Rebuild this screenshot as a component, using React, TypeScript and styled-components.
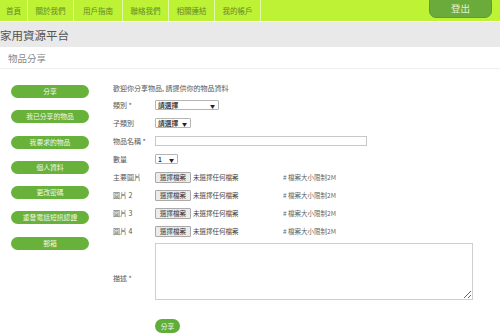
import React from 'react';
import styled, { createGlobalStyle } from 'styled-components';

const GlobalStyle = createGlobalStyle`
  html, body {
    margin: 0;
    padding: 0;
    background: #ffffff;
  }
  body {
    font-family: "Noto Sans CJK TC", "Noto Sans", sans-serif;
    color: #444444;
    overflow: hidden;
  }
`;

const Page = styled.div`
  width: 500px;
  height: 334px;
  overflow: hidden;
`;

const NavBar = styled.nav`
  display: flex;
  align-items: stretch;
  height: 21px;
  background-color: #bdf235;
`;

const NavItem = styled.a<{ $width: number }>`
  display: flex;
  align-items: center;
  justify-content: center;
  width: ${props => props.$width}px;
  border-right: 1px solid #e4f9a8;
  font-size: 7.5px;
  color: #668a2a;
  text-decoration: none;
  box-sizing: border-box;
`;

const LogoutButton = styled.button`
  margin-left: auto;
  margin-right: 8px;
  margin-top: -5px;
  width: 63px;
  height: 23px;
  padding-top: 4px;
  border: 1px solid #5e9a35;
  border-radius: 7px;
  background-color: #6aab3c;
  color: #e2f2d4;
  font-family: inherit;
  font-size: 9.5px;
  cursor: pointer;
`;

const TitleBand = styled.div`
  display: flex;
  align-items: center;
  height: 25px;
  margin-top: 1px;
  background-color: #e9e9e9;
  font-size: 11.5px;
  color: #555555;
`;

const SubHeader = styled.div`
  display: flex;
  align-items: center;
  height: 21px;
  padding-left: 8px;
  border-bottom: 1px solid #efefef;
  font-size: 9.5px;
  color: #8a8a8a;
`;

const Body = styled.div`
  display: flex;
`;

const Sidebar = styled.aside`
  display: flex;
  flex-direction: column;
  gap: 12.3px;
  width: 100px;
  padding: 16px 0 0 11px;
  box-sizing: border-box;
`;

const SideButton = styled.button`
  width: 78px;
  height: 13px;
  padding: 0;
  border: none;
  border-radius: 7px;
  background-color: #68b13b;
  color: #f2f8ec;
  font-family: inherit;
  font-size: 6.8px;
  line-height: 13px;
  cursor: pointer;
`;

const Form = styled.form`
  display: flex;
  flex-direction: column;
  padding: 14px 0 0 13px;
  font-size: 7px;
  color: #555555;
`;

const Intro = styled.p`
  margin: 0 0 3px;
  height: 10px;
  line-height: 10px;
`;

const Row = styled.div`
  display: flex;
  align-items: center;
  height: 18px;
`;

const Label = styled.label<{ $top?: number }>`
  width: 42px;
  flex-shrink: 0;
  line-height: 10px;
  align-self: ${props => (props.$top ? 'flex-start' : 'auto')};
  padding-top: ${props => props.$top ?? 0}px;
`;

const SelectBox = styled.div<{ $width: number }>`
  display: flex;
  align-items: center;
  justify-content: space-between;
  width: ${props => props.$width}px;
  height: 10px;
  padding: 0 3px 0 2px;
  border: 1px solid #b5b5b5;
  border-radius: 1px;
  box-sizing: border-box;
  font-size: 6.8px;
  font-weight: 500;
  color: #222222;
  background: #ffffff;
`;

const Caret = styled.span`
  font-size: 5px;
  color: #222222;
`;

const TextInput = styled.input`
  width: 212px;
  height: 10px;
  padding: 0;
  border: 1px solid #c8c8c8;
  box-sizing: border-box;
`;

const FileButton = styled.button`
  width: 36px;
  height: 11px;
  padding: 0;
  border: 1px solid #a9a9a9;
  border-radius: 1px;
  background: #ececec;
  color: #333333;
  font-family: inherit;
  font-size: 6.5px;
  line-height: 9px;
`;

const FileStatus = styled.span`
  width: 90px;
  padding-left: 2px;
  font-size: 6.5px;
  color: #444444;
`;

const Hint = styled.span`
  font-size: 6.5px;
  color: #666666;
`;

const DescRow = styled.div`
  display: flex;
  margin-top: 3px;
`;

const TextArea = styled.textarea`
  width: 318px;
  height: 57px;
  padding: 0;
  border: 1px solid #cfcfcf;
  box-sizing: border-box;
  resize: both;
`;

const SubmitRow = styled.div`
  display: flex;
  padding: 19px 0 0 42px;
`;

const SubmitButton = styled.button`
  width: 25px;
  height: 14px;
  padding: 0;
  border: none;
  border-radius: 7px;
  background-color: #5fae3a;
  color: #f2f8ec;
  font-family: inherit;
  font-size: 6.8px;
  cursor: pointer;
`;

const navItems: [string, number][] = [
  ['首頁', 28],
  ['關於我們', 46],
  ['用戶指南', 49],
  ['聯絡我們', 46],
  ['相關連結', 46],
  ['我的帳戶', 46],
];

const sideItems = ['分享', '我已分享的物品', '我要求的物品', '個人資料', '更改密碼', '重發電話短訊認證', '郵箱'];

const imageRows = ['主要圖片', '圖片 2', '圖片 3', '圖片 4'];

export default function App() {
  return (
    <Page>
      <GlobalStyle />
      <NavBar>
        {navItems.map(([text, width]) => (
          <NavItem key={text} $width={width}>{text}</NavItem>
        ))}
        <LogoutButton>登出</LogoutButton>
      </NavBar>
      <TitleBand>家用資源平台</TitleBand>
      <SubHeader>物品分享</SubHeader>
      <Body>
        <Sidebar>
          {sideItems.map(item => (
            <SideButton key={item}>{item}</SideButton>
          ))}
        </Sidebar>
        <Form onSubmit={e => e.preventDefault()}>
          <Intro>歡迎你分享物品, 請提供你的物品資料</Intro>
          <Row>
            <Label>類別 *</Label>
            <SelectBox $width={64}>請選擇<Caret>▼</Caret></SelectBox>
          </Row>
          <Row>
            <Label>子類別</Label>
            <SelectBox $width={36}>請選擇<Caret>▼</Caret></SelectBox>
          </Row>
          <Row>
            <Label>物品名稱 *</Label>
            <TextInput type="text" />
          </Row>
          <Row>
            <Label>數量</Label>
            <SelectBox $width={23}>1<Caret>▼</Caret></SelectBox>
          </Row>
          {imageRows.map(label => (
            <Row key={label}>
              <Label>{label}</Label>
              <FileButton type="button">選擇檔案</FileButton>
              <FileStatus>未選擇任何檔案</FileStatus>
              <Hint># 檔案大小限制2M</Hint>
            </Row>
          ))}
          <DescRow>
            <Label $top={30}>描述 *</Label>
            <TextArea />
          </DescRow>
          <SubmitRow>
            <SubmitButton type="submit">分享</SubmitButton>
          </SubmitRow>
        </Form>
      </Body>
    </Page>
  );
}
